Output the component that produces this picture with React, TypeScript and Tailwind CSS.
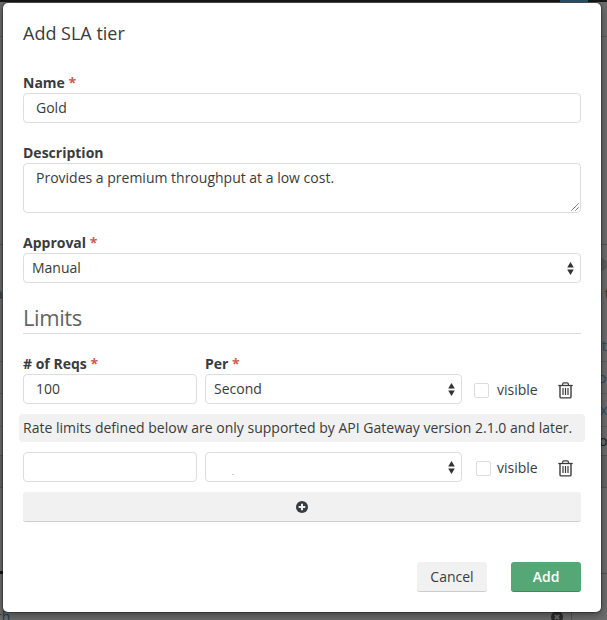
import React from "react";

function Label({ children, required }: { children: React.ReactNode; required?: boolean }) {
  return (
    <div className="h-5 text-[14px] leading-5 font-bold whitespace-nowrap">
      {children}
      {required && <span className="text-[#cd5c54]"> *</span>}
    </div>
  );
}

function Arrows() {
  return (
    <svg width="7" height="13" viewBox="0 0 7 13" className="shrink-0 fill-[#333334]">
      <path d="M3.5 0L6.8 5.6H.2zM3.5 13L.2 7.4H6.8z" />
    </svg>
  );
}

function Trash() {
  return (
    <svg width="15" height="17" viewBox="0 0 15 17" fill="none" stroke="#3c3c3d" className="shrink-0">
      <path d="M.3 3.5H14.7" strokeWidth="1.3" />
      <path d="M4.6 3.2V2.2Q4.6 .9 5.9 .9H9.1Q10.4 .9 10.4 2.2V3.2" strokeWidth="1.2" />
      <path d="M2 3.5V14.7Q2 15.9 3.2 15.9H11.8Q13 15.9 13 14.7V3.5" strokeWidth="1.4" />
      <path d="M5 6V13M7.5 6V13M10 6V13" strokeWidth="1.2" />
    </svg>
  );
}

function Select({ value, className }: { value: string; className: string }) {
  return (
    <div className={`flex h-[30px] items-center justify-between rounded border border-[#dddddf] bg-white pr-[6px] pl-2 ${className}`}>
      {value ? <span>{value}</span> : <span className="mt-[15px] ml-[18px] h-px w-[2px] bg-[#cccccc]" />}
      <Arrows />
    </div>
  );
}

function Visible({ box }: { box: string }) {
  return (
    <>
      <span className={`size-[15px] shrink-0 rounded-[2px] border border-[#dddddf] ${box}`} />
      <span className="ml-auto w-[41px]">visible</span>
      <span className="ml-[20px] flex w-[15px]"><Trash /></span>
    </>
  );
}

function Backdrop() {
  return (
    <div className="absolute inset-0 overflow-hidden bg-[#6c6c6c] text-[14px] leading-5">
      <div className="absolute inset-x-0 top-0 h-[2px] bg-[#171717]" />
      <div className="absolute top-0 left-[560px] h-[2px] w-[28px] bg-[#28536b]" />
      <div className="absolute inset-x-0 top-[36px] h-px bg-[#5c5c5c]" />
      <div className="absolute inset-x-0 top-[244px] h-px bg-[#555555]" />
      <div className="absolute top-[258px] left-[588px] h-[13px] w-[19px] rounded-full bg-[#5b5b5b]" />
      <div className="absolute inset-x-0 top-[361px] h-px bg-[#5d5d5d]" />
      <div className="absolute inset-x-0 top-[393px] h-px bg-[#5d5d5d]" />
      <div className="absolute inset-x-0 top-[426px] h-px bg-[#5d5d5d]" />
      <div className="absolute inset-x-0 top-[455px] h-[33px] border-y border-[#555555] bg-[#656565]" />
      <div className="absolute top-[571px] left-0 h-[3px] w-[4px] bg-[#161616]" />
      <div className="absolute top-[573px] right-0 h-px w-[7px] bg-[#555555]" />
      <div className="absolute top-[284px] -left-[5px] text-[#343738]">a</div>
      <div className="absolute top-[284px] left-[605px] text-[#292929]">t</div>
      <div className="absolute top-[336px] left-[594px] text-[#284e67]">at</div>
      <div className="absolute top-[368px] left-[598px] text-[#284e67]">o</div>
      <div className="absolute top-[400px] left-[600px] text-[#284e67]">x</div>
      <div className="absolute top-[431px] left-[599px] text-[#202020]">o</div>
      <div className="absolute top-[607px] -left-[4px] text-[#273a44]">rh</div>
      <svg className="absolute top-[611px] left-[551px]" width="12" height="12" viewBox="0 0 12 12">
        <circle cx="6" cy="6" r="6" fill="#2b2b2b" />
        <path d="M3.8 3.8L8.2 8.2M8.2 3.8L3.8 8.2" stroke="#6c6c6c" strokeWidth="1.8" />
      </svg>
      <div className="absolute top-[612px] left-[571px] h-2 w-px bg-[#555555]" />
    </div>
  );
}

export default function App() {
  return (
    <div className="relative h-[620px] w-[607px] overflow-hidden font-['Open_Sans','Noto_Sans',sans-serif] text-[14px] leading-5 text-[#3a3b3c]">
      <Backdrop />
      <div className="relative mt-[3px] ml-[3px] flex h-[609px] w-[598px] flex-col rounded-[5px] bg-white px-5 pt-[18px] shadow-[0_3px_9px_rgba(0,0,0,0.4),0_0_1px_1px_rgba(0,0,0,0.3)]">
        <h1 className="h-6 text-[18px] leading-6">Add SLA tier</h1>

        <div className="mt-7">
          <Label required>Name</Label>
          <div className="flex h-[30px] items-center rounded border border-[#dddddf] px-3">Gold</div>
        </div>

        <div className="mt-5">
          <Label>Description</Label>
          <div className="flex h-[50px] items-end justify-between rounded border border-[#dddddf] pr-px pb-px pl-3">
            <span className="self-start pt-[4px]">Provides a premium throughput at a low cost.</span>
            <svg width="8" height="8" viewBox="0 0 8 8" stroke="#444" strokeWidth="1" strokeDasharray="1.4 .4">
              <path d="M.5 7.5L7.5 .5M4.5 7.5L7.5 4.5" />
            </svg>
          </div>
        </div>

        <div className="mt-5">
          <Label required>Approval</Label>
          <Select value="Manual" className="w-full" />
        </div>

        <h2 className="mt-[20px] h-[31px] border-b border-[#dddddf] text-[22px] leading-[29px] tracking-[-0.4px] text-[#636466]">Limits</h2>

        <div className="mt-5 flex gap-2">
          <div className="w-[174px]"><Label required># of Reqs</Label></div>
          <Label required>Per</Label>
        </div>
        <div className="flex h-[30px] gap-2">
          <div className="flex w-[174px] items-center rounded border border-[#dddddf] px-3">100</div>
          <Select value="Second" className="w-[257px]" />
          <div className="flex flex-1 items-center pt-[2px] pr-2 pl-1">
            <Visible box="" />
          </div>
        </div>

        <div className="-mx-1 mt-[10px] h-7 rounded bg-[#f1f1f1] px-1 leading-7 tracking-[0.01px] whitespace-nowrap">
          Rate limits defined below are only supported by API Gateway version 2.1.0 and later.
        </div>

        <div className="mt-[10px] flex h-[30px] gap-2">
          <div className="w-[174px] rounded border border-[#dddddf]" />
          <Select value="" className="w-[257px]" />
          <div className="flex flex-1 items-center pt-[2px] pr-2 pl-1">
            <Visible box="ml-[2px]" />
          </div>
        </div>

        <div className="mt-[10px] flex h-[30px] shrink-0 items-center justify-center rounded-[3px] border-b border-[#cccccc] bg-[#f1f1f1]">
          <svg width="12" height="12" viewBox="0 0 12 12">
            <circle cx="6" cy="6" r="6" fill="#3a3b3c" />
            <path d="M6 2.7V9.3M2.7 6H9.3" stroke="#f1f1f1" strokeWidth="2" />
          </svg>
        </div>

        <div className="mt-10 flex justify-end gap-6">
          <div className="flex h-[30px] w-[70px] items-center justify-center rounded-[3px] border-b border-[#cccccc] bg-[#f1f1f1]">Cancel</div>
          <div className="flex h-[30px] w-[70px] items-center justify-center rounded-[3px] border-b border-[#3f895c] bg-[#55a876] font-semibold text-white">Add</div>
        </div>
      </div>
    </div>
  );
}
